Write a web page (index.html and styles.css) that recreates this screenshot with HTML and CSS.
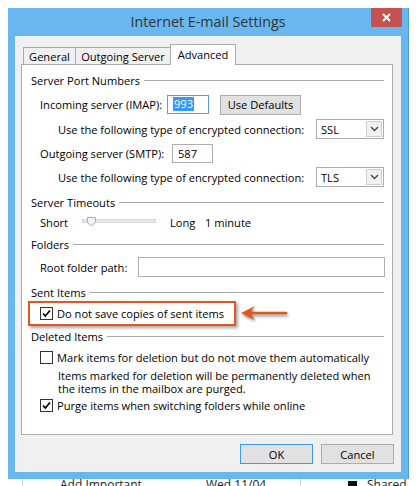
FILE: index.html
```html
<!DOCTYPE html>
<html>
<head>
<meta charset="utf-8">
<link rel="stylesheet" href="styles.css">
</head>
<body>
<div class="window">
  <div class="titlebar">
    <span class="title">Internet E-mail Settings</span>
    <div class="close"><svg width="9" height="9" viewBox="0 0 9 9"><path d="M1 1 L8 8 M8 1 L1 8" stroke="#fff" stroke-width="2"/></svg></div>
  </div>
  <div class="client">
    <div class="tabs">
      <div class="tab t1">General</div>
      <div class="tab t2">Outgoing Server</div>
      <div class="tab t3 active">Advanced</div>
    </div>
    <div class="panel">
      <div class="group-head g1">Server Port Numbers</div>
      <div class="row r-in">
        <span class="lbl w-in">Incoming server (IMAP):</span>
        <div class="input focus i-imap"><span class="sel">993</span></div>
        <div class="btn b-def">Use Defaults</div>
      </div>
      <div class="row r-enc1">
        <span class="lbl">Use the following type of encrypted connection:</span>
        <div class="select"><span class="sval">SSL</span><span class="drop"><svg width="9" height="6" viewBox="0 0 9 6"><path d="M1 1 L4.5 4.5 L8 1" fill="none" stroke="#444" stroke-width="1.4"/></svg></span></div>
      </div>
      <div class="row r-out">
        <span class="lbl w-out">Outgoing server (SMTP):</span>
        <div class="input i-smtp">587</div>
      </div>
      <div class="row r-enc2">
        <span class="lbl">Use the following type of encrypted connection:</span>
        <div class="select"><span class="sval">TLS</span><span class="drop"><svg width="9" height="6" viewBox="0 0 9 6"><path d="M1 1 L4.5 4.5 L8 1" fill="none" stroke="#444" stroke-width="1.4"/></svg></span></div>
      </div>

      <div class="group-head g2">Server Timeouts</div>
      <div class="row r-short">
        <span class="lbl w-short">Short</span>
        <div class="slider"><svg class="thumb" width="9" height="10" viewBox="0 0 9 10"><path d="M0.5 0.5 H8.5 V5.5 L4.5 9 L0.5 5.5 Z" fill="#f2f2f2" stroke="#b0b0b0"/></svg></div>
        <span class="lbl w-long">Long</span>
        <span class="lbl">1 minute</span>
      </div>

      <div class="group-head g3">Folders</div>
      <div class="row r-root">
        <span class="lbl w-root">Root folder path:</span>
        <div class="input i-root"></div>
      </div>

      <div class="group-head g4">Sent Items</div>
      <div class="row r-dont">
        <span class="cb"><svg width="11" height="11" viewBox="0 0 11 11"><path d="M2 5.5 L4.3 8 L9 2.5" fill="none" stroke="#000" stroke-width="1.7"/></svg></span>
        <span class="lbl">Do not save copies of sent items</span>
      </div>

      <div class="group-head g5">Deleted Items</div>
      <div class="row r-mark">
        <span class="cb"></span>
        <span class="lbl">Mark items for deletion but do not move them automatically</span>
      </div>
      <p class="note">Items marked for deletion will be permanently deleted when<br>the items in the mailbox are purged.</p>
      <div class="row r-purge">
        <span class="cb"><svg width="11" height="11" viewBox="0 0 11 11"><path d="M2 5.5 L4.3 8 L9 2.5" fill="none" stroke="#000" stroke-width="1.7"/></svg></span>
        <span class="lbl">Purge items when switching folders while online</span>
      </div>

      <div class="highlight"></div>
      <svg class="arrow" width="50" height="20" viewBox="0 0 50 20"><path d="M1 9 L15 2 Q11 6 12 9 Q11 12 15 16 Z" fill="#e2561f"/><path d="M12 9 H46" stroke="#e2561f" stroke-width="2.6" stroke-linecap="round"/></svg>
    </div>
    <div class="buttons">
      <div class="btn b-ok">OK</div>
      <div class="btn b-cancel">Cancel</div>
    </div>
  </div>
</div>
<div class="desk">
  <span class="vline l1"></span>
  <span class="dtext d1">Add Important</span>
  <span class="dtext d2">Wed 11/04</span>
  <span class="vline l2"></span>
  <span class="dicon"></span>
  <span class="dtext d3">Shared</span>
</div>
</body>
</html>
```
FILE: styles.css
```css
* { box-sizing: border-box; }
body {
  margin: 0;
  width: 419px;
  height: 486px;
  overflow: hidden;
  background: #fff;
  font-family: "Open Sans", "Noto Sans", sans-serif;
  font-size: 11.1px;
  color: #000;
}
.window {
  margin: 8px 0 0 8px;
  width: 401px;
  height: 471px;
  background: #69b7ef;
  border-right: 1px solid #4e9edb;
  display: flex;
  flex-direction: column;
}
.titlebar {
  height: 28px;
  position: relative;
  display: flex;
  justify-content: center;
  align-items: center;
  padding-bottom: 2px;
}
.title {
  font-size: 14.3px;
  color: #333;
}
.close {
  position: absolute;
  top: 0;
  right: 6px;
  width: 31px;
  height: 19px;
  background: #c75050;
  display: flex;
  align-items: center;
  justify-content: center;
}
.client {
  flex: 1;
  margin: 0 7px 7px 7px;
  background: #f0f0f0;
  padding: 8px 8px 0 6px;
  display: flex;
  flex-direction: column;
}
.tabs {
  display: flex;
  align-items: flex-end;
  height: 20px;
  padding-left: 2px;
  position: relative;
  z-index: 1;
}
.tab {
  height: 17px;
  border: 1px solid #acacac;
  border-bottom: none;
  background: #f0f0f0;
  display: flex;
  align-items: center;
  justify-content: center;
  white-space: nowrap;
}
.t1 { width: 53px; }
.t2 { width: 96px; margin-left: -1px; }
.t3 { width: 66px; margin-left: -1px; }
.tab.active {
  height: 21px;
  margin-bottom: -1px;
  background: #fff;
  padding-bottom: 2px;
}
.panel {
  height: 371px;
  border: 1px solid #acacac;
  background: #fff;
  padding: 0 8px 0 9px;
  position: relative;
}
.group-head {
  display: flex;
  align-items: center;
  height: 16px;
  white-space: nowrap;
}
.group-head::after {
  content: "";
  flex: 1;
  height: 1px;
  background: #a9a9a9;
  margin-left: 4px;
}
.g1 { margin-top: 7px; }
.g2 { margin-top: 7px; }
.g3 { margin-top: 6px; }
.g4 { margin-top: 7px; }
.g5 { margin-top: 7px; }
.row {
  display: flex;
  align-items: center;
  height: 20px;
  white-space: nowrap;
}
.lbl { white-space: nowrap; }
.r-in { margin-top: 6px; padding-left: 9px; }
.r-enc1 { margin-top: 5px; padding-left: 27px; }
.r-out { margin-top: 4px; padding-left: 9px; }
.r-enc2 { margin-top: 4px; padding-left: 27px; }
.r-short { margin-top: 4px; height: 16px; padding-left: 9px; }
.r-root { margin-top: 5px; padding-left: 9px; }
.r-dont { margin-top: 5px; height: 16px; padding-left: 9px; }
.r-mark { margin-top: 5px; height: 16px; padding-left: 9px; }
.r-purge { margin-top: 2px; height: 16px; padding-left: 9px; }
.w-in { width: 127px; }
.w-out { width: 132px; }
.w-short { width: 42px; }
.w-long { width: 35px; }
.w-root { width: 98px; }
.input {
  height: 19px;
  border: 1px solid #abadb3;
  background: #fff;
  display: flex;
  align-items: center;
  padding-left: 5px;
}
.input.focus { border-color: #569de5; padding-left: 5px; }
.i-imap { width: 42px; }
.i-smtp { width: 41px; }
.i-root { flex: 1; height: 20px; margin-right: -1px; }
.sel {
  background: #3399ff;
  color: #fff;
  padding: 0 1px;
  line-height: 14px;
}
.btn {
  height: 20px;
  border: 1px solid #acacac;
  background: #e1e1e1;
  display: flex;
  align-items: center;
  justify-content: center;
  white-space: nowrap;
}
.b-def { width: 81px; margin-left: 11px; margin-top: 1px; }
.select {
  margin-left: auto;
  width: 68px;
  height: 20px;
  border: 1px solid #acacac;
  background: #fff;
  display: flex;
  align-items: center;
  padding: 1px;
}
.sval { padding-left: 3px; }
.drop {
  margin-left: auto;
  width: 16px;
  height: 16px;
  border: 1px solid #d0d0d0;
  background: #f0f0f0;
  display: flex;
  align-items: center;
  justify-content: center;
}
.slider {
  position: relative;
  width: 74px;
  height: 4px;
  margin-top: -3px;
  margin-right: 14px;
  background: #e7eaea;
  border: 1px solid #d6d6d6;
}
.thumb {
  position: absolute;
  left: 4px;
  top: -3px;
}
.cb {
  width: 13px;
  height: 13px;
  border: 1px solid #333;
  background: #fff;
  margin-right: 4px;
  display: flex;
  align-items: center;
  justify-content: center;
}
.note {
  margin: 4px 0 0 0;
  padding-left: 27px;
  line-height: 13px;
  white-space: nowrap;
}
.highlight {
  position: absolute;
  left: 6px;
  top: 236px;
  width: 208px;
  height: 25px;
  border: 2px solid #e2561f;
  box-shadow: 2px 2px 3px rgba(0, 0, 0, 0.35);
}
.arrow {
  position: absolute;
  left: 218px;
  top: 239px;
  filter: drop-shadow(1px 2px 1.5px rgba(0, 0, 0, 0.45));
}
.buttons {
  display: flex;
  justify-content: flex-end;
  gap: 8px;
  margin-top: 9px;
  margin-right: -1px;
}
.b-ok, .b-cancel { width: 73px; }
.b-ok { border-color: #3d9aea; }
.desk {
  height: 7px;
  overflow: hidden;
  display: flex;
  align-items: flex-start;
  padding-left: 22px;
  font-size: 12px;
  line-height: 14px;
  color: #222;
}
.vline { width: 1px; height: 7px; background: #cfcfcf; }
.dtext { white-space: nowrap; margin-top: -1px; }
.d1 { margin-left: 37px; width: 146px; }
.d2 { width: 94px; }
.l2 { margin-right: 47px; }
.dicon { width: 9px; height: 7px; background: #111; margin-top: 2px; margin-right: 10px; }
```
